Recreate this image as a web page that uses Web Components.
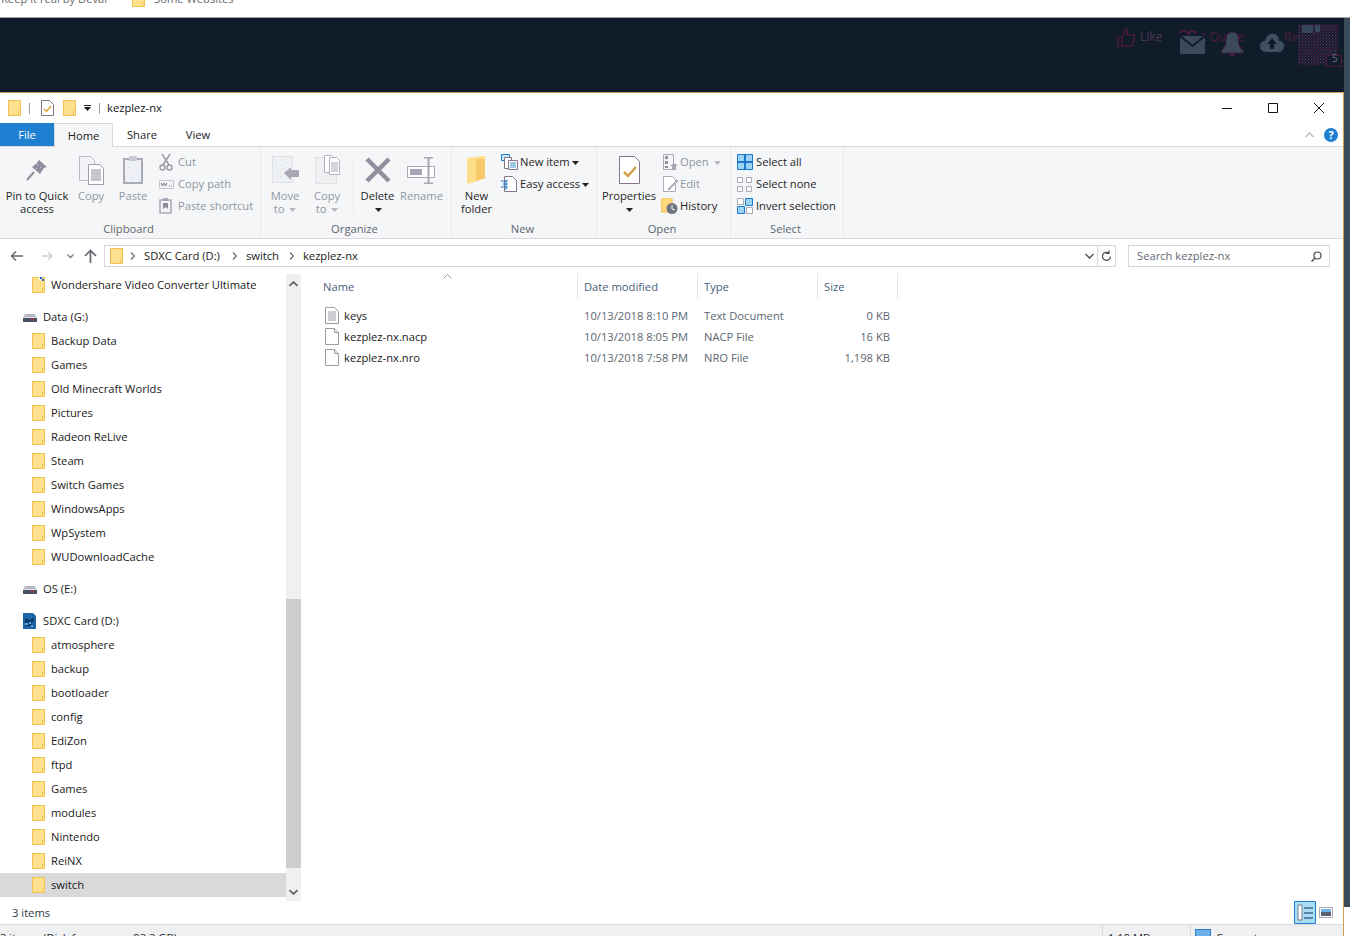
<!DOCTYPE html>
<html lang="en">
  <head>
    <meta charset="UTF-8" />
    <title>kezplez-nx</title>
    <style>
      html, body { margin: 0; height: 936px; overflow: hidden; background: #fff; }
      body { font: 11.2px/16px "Open Sans", "Liberation Sans", sans-serif; color: #1a1a1a; }
    </style>
  </head>
  <body>
    <bookmark-bar>
      <span style="margin-left:1px">Keep it real by Devai</span>
      <x-icon name="folder" style="margin-left:25px"></x-icon>
      <span style="margin-left:9px">Some Websites</span>
    </bookmark-bar>

    <desktop-shot>
      <forum-band slot="band"></forum-band>
      <explorer-window slot="window" title="kezplez-nx">
        <title-row slot="title"></title-row>
        <ribbon-tabs slot="tabs"></ribbon-tabs>
        <explorer-ribbon slot="ribbon"></explorer-ribbon>
        <address-row slot="address"></address-row>
        <nav-tree slot="tree"></nav-tree>
        <file-list slot="files"></file-list>
        <status-row slot="status"></status-row>
        <under-status slot="under"></under-status>
      </explorer-window>
    </desktop-shot>

    <script>
      const GREY = "#a9a9b8";
      const ICONS = {
        folder: [13, 16, `<rect x=".5" y=".5" width="12" height="15" fill="#ffe08f" stroke="#f4c24f"/><path d="M10.5 11.5h2v4h-2z" fill="#ffe9b0" stroke="#f4c24f"/>`],
        wfolder: [13, 16, `<rect x=".5" y=".5" width="12" height="15" fill="#ffe08f" stroke="#f4c24f"/><path d="M10.5 11.5h2v4h-2z" fill="#ffe9b0" stroke="#f4c24f"/><path d="M7 0h3v3H7z" fill="#fff"/><path d="M8 0h2v2H8zM10 2h2v2h-2z" fill="#1668c8"/>`],
        titledoc: [13, 16, `<path d="M.5.5h8l4 4v11H.5z" fill="#fff" stroke="#85758a"/><path d="M3 9l2.5 2.5L10 6" fill="none" stroke="#e0a030" stroke-width="1.4"/>`],
        drive: [14, 16, `<path d="M2 5h10l2 4H0z" fill="#b5bac4"/><path d="M0 9h14v4H0z" fill="#4a5160"/><path d="M8 10h3v1H8z" fill="#c33"/><path d="M0 8h14v1H0z" fill="#e2e4ea"/>`],
        sd: [13, 16, `<path d="M0 0h10l3 3v13H0z" fill="#1c67a8"/><path d="M2 5l5 2 4-3v4l-3 2 3 3H2z" fill="#0c3b66"/><path d="M2 10h3v2H2zM6 9h2v2H6zM8 12h2v2H8z" fill="#5bb0ee"/>`],
        text: [14, 17, `<path d="M.5.5h9l4 4v12H.5z" fill="#fff" stroke="#9a9aa2"/><path d="M3 5h8M3 7h8M3 9h8M3 11h8M3 13h8" stroke="#9a9aa2"/>`],
        blank: [14, 17, `<path d="M.5.5h9l4 4v12H.5z" fill="#fff" stroke="#9a9aa2"/><path d="M9.5.5v4h4" fill="#eee" stroke="#9a9aa2"/>`],
        pin: [22, 22, `<path d="M13 1l8 7-3 1-4 6-8-7 5-4z" fill="#8f8f9f"/><path d="M8 13l-7 8" stroke="#8f8f9f" stroke-width="2"/><path d="M11 5h1v1h-1zM14 8h1v1h-1zM10 9h1v1h-1z" fill="#c9c9d4"/>`],
        copy: [25, 29, `<path d="M.5.5h11l4 4v20H.5z" fill="#f3f4f8" stroke="#b9bac8"/><path d="M9.5 8.5h11l4 4v16h-15z" fill="#fff" stroke="#9e9eae"/><path d="M12 14h10M12 16h10M12 18h10M12 20h10M12 22h10M12 24h10" stroke="#8c8c9c"/>`],
        paste: [20, 30, `<path d="M1 4h18v24H1z" fill="#eef0f5" stroke="${GREY}" stroke-width="2"/><path d="M6 1h8v5H6z" fill="#c9cad6"/><path d="M6 12h1v1H6zM13 18h1v1h-1zM9 22h1v1H9zM15 24h1v1h-1z" fill="#9fd4f3"/>`],
        cut: [14, 17, `<path d="M3 0l7 11M11 0L4 11" stroke="#9a9aa8" stroke-width="1.5"/><circle cx="3.5" cy="13.5" r="2.5" fill="none" stroke="#9a9aa8" stroke-width="1.4"/><circle cx="10.5" cy="13.5" r="2.5" fill="none" stroke="#9a9aa8" stroke-width="1.4"/>`],
        copypath: [15, 9, `<path d="M.5.5h14v8H.5z" fill="#f4f4f6" stroke="#c6c6d0"/><path d="M2 3l1.500 3L5 3l1.500 3L8 3M10 6h1M12 6h1" fill="none" stroke="#77778a"/>`],
        shortcut: [13, 16, `<path d="M1 2h11v13H1z" fill="#f3f3f6" stroke="${GREY}" stroke-width="1.500"/><path d="M4 0h5v3H4z" fill="${GREY}"/><path d="M4 5h5v6l-2-2-3 2z" fill="#8b8b9b"/>`],
        moveto: [27, 29, `<path d="M0 0h21v27H0z" fill="#dfe1e6"/><path d="M1 1h19v25H1z" fill="#eef0f2"/><path d="M3 4h1v1H3zM9 9h1v1H9zM5 14h1v1H5zM14 6h1v1h-1zM8 20h1v1H8z" fill="#b8dff3"/><path d="M12 17l7-6v3h8v7h-8v3z" fill="#a7a7b6"/>`],
        copyto: [25, 30, `<path d="M0 2h22v27H0z" fill="#dfe1e6"/><path d="M1 3h20v25H1z" fill="#eef0f2"/><path d="M9.500.5h7l3 3v14h-10z" fill="#fff" stroke="#b2b2c0"/><path d="M14.500 2.500h7l3 3v14h-10z" fill="#fff" stroke="#b2b2c0"/><path d="M16 8h7M16 10h7M16 12h7M16 14h7M16 16h7" stroke="#a9a9b8"/>`],
        del: [26, 26, `<path d="M2 2l22 22M24 2L2 24" stroke="#8f8f9e" stroke-width="4.500"/>`],
        rename: [29, 27, `<path d="M.5 9.500h27v11H.5z" fill="#fff" stroke="${GREY}"/><path d="M3 12h12v6H3z" fill="#a7a7b6"/><path d="M17 .5h9M17 26.500h9M21.500 1v25" fill="none" stroke="#a7a7b6" stroke-width="2"/>`],
        newfolder: [19, 28, `<path d="M0 2l15-2h3v22l-10 4-8 2z" fill="#ffdf8a"/><path d="M9 3h9v19l-9 3z" fill="#f7c968"/><path d="M11 6h1v1h-1zM14 10h1v1h-1zM11 14h1v1h-1zM15 17h1v1h-1z" fill="#ffeeb8"/>`],
        newitem: [17, 16, `<path d="M.5.5h8v6h-8z" fill="#cfe8fb" stroke="#1c78c8"/><path d="M3.500 3.500h7v11h-7z" fill="#fff" stroke="#85758a"/><path d="M7.500 6.500h9v9h-9z" fill="#fff" stroke="#85758a"/><path d="M9 9h6M9 11h6M9 13h6" stroke="#3d8ec9"/>`],
        easy: [16, 16, `<path d="M3.500.5h8l4 4v11h-12z" fill="#fff" stroke="#85758a"/><path d="M0 5h7M2 8h5M0 11h7" stroke="#1c78c8"/><path d="M5 4v10" stroke="#1c78c8"/>`],
        props: [21, 28, `<path d="M.5.5h15l5 5v22H.5z" fill="#fff" stroke="#85758a"/><path d="M5 16l4 4 8-9" fill="none" stroke="#d2a24a" stroke-width="2.500"/>`],
        open: [15, 16, `<path d="M.5.5h10v15H.5z" fill="#f5f5f7" stroke="${GREY}"/><path d="M2 2h3v3H2zM2 7h3v3H2zM2 12h3v2H2z" fill="#8f8f9e"/><path d="M11 9l4 3h-2v4h-4v-4H7z" fill="#a7a7b6"/>`],
        edit: [15, 16, `<path d="M.5.5h9l3 3v12H.5z" fill="#fff" stroke="${GREY}"/><path d="M5 13l9-9 1 1-9 9z" fill="#c9c9d4" stroke="#a7a7b6"/>`],
        history: [17, 16, `<path d="M0 0h11v14H0z" fill="#ffd978" stroke="#f0be55"/><circle cx="11" cy="10.500" r="5.500" fill="#6e7480"/><path d="M11 7v4l3 1" fill="none" stroke="#fff"/>`],
        selall: [16, 16, `<path d="M.5.5h15v15H.5z" fill="#9bd4f5" stroke="#1c78c8"/><path d="M8 0v16M0 8h16" stroke="#1c78c8" stroke-width="2"/>`],
        selnone: [15, 15, `<path d="M.5.5h5v5h-5zM9.500.5h5v5h-5zM.5 9.500h5v5h-5zM9.500 9.500h5v5h-5z" fill="#fff" stroke="${GREY}"/>`],
        selinv: [16, 16, `<path d="M.5.5h6v6h-6zM9.500 9.500h6v6h-6z" fill="#fff" stroke="${GREY}"/><path d="M8.500.5h7v7h-7zM.5 8.500h7v7h-7z" fill="#9bd4f5" stroke="#1c78c8"/>`],
      };

      class XIcon extends HTMLElement {
        connectedCallback() {
          const [w, h, body] = ICONS[this.getAttribute("name")];
          const shadow = this.attachShadow({ mode: "open" });
          shadow.innerHTML = `
            <style>:host { display: inline-flex; flex: none; } svg { display: block; }</style>
            <svg width="${w}" height="${h}" viewBox="0 0 ${w} ${h}">${body}</svg>`;
        }
      }
      customElements.define("x-icon", XIcon);

      // helper for the plain "one shadow root, set once" elements
      const define = (name, css, html) => {
        customElements.define(
          name,
          class extends HTMLElement {
            constructor() {
              super();
              const shadow = this.attachShadow({ mode: "open" });
              shadow.innerHTML = `<style>${css}</style>${typeof html === "function" ? html(this) : html}`;
            }
          }
        );
      };

      define(
        "bookmark-bar",
        `:host { display: flex; align-items: center; height: 17px; overflow: hidden; border-bottom: 1px solid #9ea2a6; color: #6a6a6a; box-sizing: content-box; }
         div { display: flex; align-items: center; margin-top: -19px; height: 17px; }`,
        `<div><slot></slot></div>`
      );

      define(
        "desktop-shot",
        `:host { display: flex; height: 918px; }
         .left { width: 1344px; display: flex; flex-direction: column; }
         .strip { width: 6px; height: 889px; background: #3a4a5b; }`,
        `<div class="left"><slot name="band"></slot><slot name="window"></slot></div><div class="strip"></div>`
      );

      define(
        "forum-band",
        `:host { display: block; position: relative; height: 74px; background: #111c2b; }
         .lbl { position: absolute; top: 11px; color: #4a1c3a; font-size: 12px; }
         svg { position: absolute; }`,
        `<span class="lbl" style="left:1140px;color:#4a3a50">Like</span>
         <span class="lbl" style="left:1202px">t Quote</span>
         <span class="lbl" style="left:1284px">Reply</span>
         <svg style="left:1117px;top:10px" width="20" height="20" viewBox="0 0 20 20"><path d="M1 9h4v9H1zM5 9l4-8c2 0 2 2 1 6h7c1 1 0 9-2 11H5" fill="none" stroke="#4a1c3a" stroke-width="1.500"/></svg>
         <svg style="left:1178px;top:11px" width="28" height="26" viewBox="0 0 28 26"><path d="M2 7h25v18H2z" fill="#3a4a5b"/><path d="M2 7l12.500 10L27 7" fill="none" stroke="#111c2b" stroke-width="2"/><path d="M2 4c2-4 7-3 8 1 2-4 7-4 8 0" fill="none" stroke="#4a1c3a" stroke-width="2"/></svg>
         <svg style="left:1221px;top:14px" width="23" height="24" viewBox="0 0 23 24"><path d="M11.500 0c5 0 6 4 6 9 0 5 2 7 5 10v2H0v-2c3-3 5-5 5-10 0-5 1-9 6.500-9z M8 22h7l-3.500 2z" fill="#3a4a5b" stroke="#3f1a36"/></svg>
         <svg style="left:1260px;top:14px" width="24" height="22" viewBox="0 0 24 22"><path d="M6 20C1 20 0 16 0 14c0-3 2-5 5-5 1-5 5-8 9-7 4 1 5 4 5 7 3 0 5 2 5 5s-2 6-5 6z" fill="#3f5062"/><path d="M12 6l5 6h-3v5h-4v-5H7z" fill="#111c2b"/></svg>
         <svg style="left:1298px;top:6px" width="44" height="43" viewBox="0 0 44 43" shape-rendering="crispEdges"><defs><pattern id="d" width="3" height="3" patternUnits="userSpaceOnUse"><rect width="3" height="3" fill="#171d30"/><rect width="1" height="1" fill="#5c1840"/><rect x="2" y="1" width="1" height="1" fill="#4a1c3a"/><rect x="1" y="2" width="1" height="1" fill="#3d4a5e"/></pattern></defs><path d="M0 0h40v31h4v12H28v-2H0z" fill="url(#d)"/><path d="M4 1h11v8H4zM17 1h5v7h-5z" fill="#34465a"/><path d="M28.500 31.500h15v11h-15z" fill="#141b2c" stroke="#4a1c3a"/></svg>
         <span class="lbl" style="left:1332px;top:34px;color:#5f6f80;font-size:10px;line-height:12px">5</span>`
      );

      define(
        "explorer-window",
        `:host { display: flex; flex-direction: column; flex: 1; border-top: 1px solid #cb9f55; border-right: 1px solid #cb9f55; background: #fff; min-height: 0; width: 1343px; box-sizing: content-box; }
         .panes { flex: 1; display: flex; min-height: 0; }`,
        `<slot name="title"></slot><slot name="tabs"></slot><slot name="ribbon"></slot><slot name="address"></slot>
         <div class="panes"><slot name="tree"></slot><slot name="files"></slot></div>
         <slot name="status"></slot><slot name="under"></slot>`
      );

      define(
        "title-row",
        `:host { display: flex; align-items: center; height: 30px; padding-left: 8px; color: #14141e; }
         .pipe { width: 1px; height: 11px; background: #a0a0a0; }
         .arrow { width: 7px; height: 6px; margin-left: 8px; }
         .t { margin-left: 7px; }
         .ctl { margin-left: auto; display: flex; padding-right: 1px; }
         .ctl svg { width: 46px; height: 14px; }`,
        `<x-icon name="folder"></x-icon>
         <span class="pipe" style="margin-left:8px"></span>
         <x-icon name="titledoc" style="margin-left:11px"></x-icon>
         <x-icon name="folder" style="margin-left:9px"></x-icon>
         <svg class="arrow" viewBox="0 0 7 6"><path d="M0 0h7v1H0zM0 2h7L3.500 6z" fill="#14141e"/></svg>
         <span class="pipe" style="margin-left:8px"></span>
         <span class="t">kezplez-nx</span>
         <div class="ctl">
           <svg viewBox="0 0 46 14"><path d="M18 7.500h10" stroke="#14141e"/></svg>
           <svg viewBox="0 0 46 14"><path d="M18.500 2.500h9v9h-9z" fill="none" stroke="#14141e"/></svg>
           <svg viewBox="0 0 46 14"><path d="M18 2l10 10M28 2L18 12" stroke="#14141e"/></svg>
         </div>`
      );

      define(
        "ribbon-tabs",
        `:host { display: flex; height: 24px; align-items: stretch; border-bottom: 1px solid #d9d9dc; position: relative; box-sizing: border-box; }
         span { display: flex; align-items: center; justify-content: center; color: #222; }
         .file { width: 54px; background: #1f7fd0; color: #fff; }
         .home { width: 57px; background: #f5f6f7; border: 1px solid #d9d9dc; border-bottom: 0; margin-bottom: -1px; }
         .share { width: 60px; margin-left: -1px; }
         .view { width: 52px; }
         .end { margin-left: auto; display: flex; align-items: center; padding-right: 5px; gap: 10px; }
         .q { width: 14px; height: 14px; border-radius: 50%; background: #1f7fd0; color: #fff; font-size: 11px; font-weight: 700; line-height: 14px; }`,
        `<span class="file">File</span><span class="home">Home</span><span class="share">Share</span><span class="view">View</span>
         <div class="end">
           <svg width="9" height="6" viewBox="0 0 9 6"><path d="M.5 5l4-4 4 4" fill="none" stroke="#b8b8be" stroke-width="1.300"/></svg>
           <span class="q">?</span>
         </div>`
      );

      // ribbon parts
      define(
        "rb-big",
        `:host { display: flex; flex-direction: column; align-items: center; width: var(--w, 42px); text-align: center; line-height: 13px; white-space: nowrap; color: #262626; }
         :host([off]) { color: #8e98a2; }
         .i { height: 38px; display: flex; align-items: center; justify-content: center; }
         .t { display: block; }`,
        (el) => `<div class="i"><slot name="i"></slot></div><div class="t"><slot></slot></div>`
      );
      define(
        "rb-small",
        `:host { display: flex; align-items: center; height: 22px; white-space: nowrap; color: #262626; }
         :host([off]) { color: #8e98a2; }
         .i { width: var(--iw, 19px); display: flex; flex: none; }
         .t { display: block; }`,
        `<div class="i"><slot name="i"></slot></div><div class="t"><slot></slot></div>`
      );
      define(
        "rb-group",
        `:host { display: flex; flex-direction: column; height: 90px; box-sizing: border-box; border-right: 1px solid #e8e9ec; padding-top: 4px; }
         .b { flex: 1; display: flex; }
         .l { text-align: center; height: 16px; color: #5c6670; line-height: 16px; padding-right: 3px; }`,
        (el) => `<div class="b"><slot></slot></div><div class="l">${el.getAttribute("label")}</div>`
      );
      define(
        "rb-col",
        `:host { display: flex; flex-direction: column; margin-top: 0; }`,
        `<slot></slot>`
      );

      const caret = (c) => `<svg width="7" height="4" viewBox="0 0 7 4" style="margin-left:2px;vertical-align:1px"><path d="M0 0h7L3.500 4z" fill="${c}"/></svg>`;
      const big = (icon, label, w, off) =>
        `<rb-big style="--w:${w}px" ${off ? "off" : ""}><x-icon slot="i" name="${icon}"></x-icon>${label}</rb-big>`;
      const small = (icon, label, iw, off, nudge = 0) =>
        `<rb-small style="--iw:${iw}px" ${off ? "off" : ""}><x-icon slot="i" name="${icon}" style="margin-left:${nudge}px"></x-icon>${label}</rb-small>`;

      define(
        "explorer-ribbon",
        `:host { display: flex; height: 92px; background: #f5f6f7; border-bottom: 1px solid #d9d9dc; box-sizing: border-box; }
         .sep { width: 1px; height: 58px; background: #e8e9ec; margin: 6px 0 0 8px; }`,
        `
        <rb-group label="Clipboard" style="width:261px">
          ${big("pin", "Pin to Quick<br>access", 74, false)}
          ${big("copy", "Copy", 34, true)}
          ${big("paste", "Paste", 50, true)}
          <rb-col style="margin-left:1px">
            ${small("cut", "Cut", 19, true)}
            ${small("copypath", "Copy path", 19, true)}
            ${small("shortcut", "Paste shortcut", 19, true)}
          </rb-col>
        </rb-group>
        <rb-group label="Organize" style="width:191px">
          ${big("moveto", "Move<br>to " + caret("#b4b8bd"), 48, true)}
          ${big("copyto", "Copy<br>to " + caret("#b4b8bd"), 36, true)}
          <div class="sep"></div>
          ${big("del", "Delete<br>" + caret("#222"), 47, false)}
          ${big("rename", "Rename", 41, true)}
        </rb-group>
        <rb-group label="New" style="width:145px">
          ${big("newfolder", "New<br>folder", 49, false)}
          <rb-col>
            ${small("newitem", "New item" + caret("#222"), 19, false)}
            ${small("easy", "Easy access" + caret("#222"), 19, false)}
          </rb-col>
        </rb-group>
        <rb-group label="Open" style="width:134px">
          ${big("props", "Properties<br>" + caret("#222"), 64, false)}
          <rb-col>
            ${small("open", "Open " + caret("#b4b8bd"), 19, true, 2)}
            ${small("edit", "Edit", 19, true, 2)}
            ${small("history", "History", 19, false)}
          </rb-col>
        </rb-group>
        <rb-group label="Select" style="width:113px">
          <rb-col style="margin-left:6px">
            ${small("selall", "Select all", 19, false)}
            ${small("selnone", "Select none", 19, false)}
            ${small("selinv", "Invert selection", 19, false)}
          </rb-col>
        </rb-group>`
      );

      define(
        "address-row",
        `:host { display: flex; align-items: flex-start; height: 34px; padding-top: 6px; box-sizing: border-box; }
         .nav { width: 104px; display: flex; align-items: center; height: 22px; padding-left: 10px; box-sizing: border-box; gap: 0; }
         .bar { width: 1012px; height: 22px; box-sizing: border-box; border: 1px solid #d9d9d9; display: flex; align-items: center; padding-left: 5px; color: #1a1a1a; }
         .bar b { font-weight: 400; }
         .end { margin-left: auto; display: flex; align-items: center; height: 100%; }
         .end i { width: 1px; height: 100%; background: #d9d9d9; margin-left: 6px; }
         .search { width: 202px; margin-left: 12px; height: 22px; box-sizing: border-box; border: 1px solid #d9d9d9; display: flex; align-items: center; justify-content: space-between; padding: 0 7px 0 8px; color: #5f6a74; }`,
        `<div class="nav">
           <svg width="14" height="12" viewBox="0 0 14 12"><path d="M13 6H2M6 1.500L1.500 6 6 10.500" fill="none" stroke="#6b6470" stroke-width="1.500"/></svg>
           <svg style="margin-left:18px" width="12" height="12" viewBox="0 0 12 12"><path d="M0 6h10M6 2l4 4-4 4" fill="none" stroke="#cfcfd6" stroke-width="1.300"/></svg>
           <svg style="margin-left:13px" width="7" height="5" viewBox="0 0 7 5"><path d="M.5.5l3 3 3-3" fill="none" stroke="#80798a" stroke-width="1.300"/></svg>
           <svg style="margin-left:10px" width="13" height="14" viewBox="0 0 13 14"><path d="M6.500 14V2M1 7l5.500-5.500L12 7" fill="none" stroke="#6b6470" stroke-width="1.700"/></svg>
         </div>
         <div class="bar">
           <x-icon name="folder"></x-icon>
           <svg style="margin-left:7px" width="5" height="8" viewBox="0 0 5 8"><path d="M1 .5L4.500 4 1 7.500" fill="none" stroke="#6b6470" stroke-width="1.200"/></svg>
           <b style="margin-left:9px">SDXC Card (D:)</b>
           <svg style="margin-left:12px" width="5" height="8" viewBox="0 0 5 8"><path d="M1 .5L4.500 4 1 7.500" fill="none" stroke="#6b6470" stroke-width="1.200"/></svg>
           <b style="margin-left:9px">switch</b>
           <svg style="margin-left:10px" width="5" height="8" viewBox="0 0 5 8"><path d="M1 .5L4.500 4 1 7.500" fill="none" stroke="#6b6470" stroke-width="1.200"/></svg>
           <b style="margin-left:9px">kezplez-nx</b>
           <div class="end">
             <svg width="9" height="6" viewBox="0 0 9 6"><path d="M.5 1l4 4 4-4" fill="none" stroke="#4a4a55" stroke-width="1.300"/></svg>
             <i style="margin-left:3px"></i>
             <svg style="margin:0 3px" width="11" height="12" viewBox="0 0 11 12"><path d="M9.500 6.500a4 4 0 1 1-1.500-3.300M8 .5v3H5" fill="none" stroke="#4a4a55" stroke-width="1.200"/></svg>
           </div>
         </div>
         <div class="search">Search kezplez-nx
           <svg width="11" height="11" viewBox="0 0 11 11"><circle cx="6.500" cy="4.500" r="3.500" fill="none" stroke="#4a4a55" stroke-width="1.200"/><path d="M4 7l-3.500 3.500" stroke="#4a4a55" stroke-width="1.500"/></svg>
         </div>`
      );

      define(
        "tree-row",
        `:host { display: flex; align-items: center; height: 24px; white-space: nowrap; padding-left: 32px; color: #1a1a1a; }
         :host([drive]) { padding-left: 23px; }
         :host([selected]) { background: #d9d9d9; }
         .i { display: flex; width: 19px; }
         :host([drive]) .i { width: 20px; }`,
        (el) => `<div class="i"><x-icon name="${el.getAttribute("icon") || "folder"}"></x-icon></div><slot></slot>`
      );

      const folderRows = (names) => names.map((n) => `<tree-row>${n}</tree-row>`).join("");
      define(
        "nav-tree",
        `:host { display: flex; width: 301px; flex: none; }
         .rows { width: 286px; }
         .gap { height: 8px; }
         .bar { width: 15px; background: #f0f0f0; margin-top: 1px; display: flex; flex-direction: column; align-items: center; }
         .up { height: 20px; display: flex; align-items: center; }
         .thumb { width: 100%; height: 269px; background: #cdcdcd; margin-top: 305px; }
         .dn { margin-top: auto; height: 18px; display: flex; align-items: center; }`,
        `<div class="rows">
           <tree-row icon="wfolder">Wondershare Video Converter Ultimate</tree-row>
           <div class="gap"></div>
           <tree-row drive icon="drive">Data (G:)</tree-row>
           ${folderRows(["Backup Data", "Games", "Old Minecraft Worlds", "Pictures", "Radeon ReLive", "Steam", "Switch Games", "WindowsApps", "WpSystem", "WUDownloadCache"])}
           <div class="gap"></div>
           <tree-row drive icon="drive">OS (E:)</tree-row>
           <div class="gap"></div>
           <tree-row drive icon="sd">SDXC Card (D:)</tree-row>
           ${folderRows(["atmosphere", "backup", "bootloader", "config", "EdiZon", "ftpd", "Games", "modules", "Nintendo", "ReiNX"])}
           <tree-row selected>switch</tree-row>
         </div>
         <div class="bar">
           <div class="up"><svg width="9" height="6" viewBox="0 0 9 6"><path d="M.5 5l4-4 4 4" fill="none" stroke="#5a5a64" stroke-width="1.600"/></svg></div>
           <div class="thumb"></div>
           <div class="dn"><svg width="9" height="6" viewBox="0 0 9 6"><path d="M.5 1l4 4 4-4" fill="none" stroke="#5a5a64" stroke-width="1.600"/></svg></div>
         </div>`
      );

      define(
        "file-row",
        `:host { display: grid; grid-template-columns: 254px 120px 120px 73px; height: 21px; align-items: center; white-space: nowrap; }
         .n { display: flex; align-items: center; gap: 5px; padding-left: 2px; color: #1a1a1a; }
         .m { color: #5c6670; padding-left: 7px; }
         .s { color: #5c6670; text-align: right; }`,
        (el) => `<div class="n"><x-icon name="${el.getAttribute("icon")}"></x-icon>${el.getAttribute("name")}</div>
                 <div class="m">${el.getAttribute("date")}</div><div class="m">${el.getAttribute("type")}</div><div class="s">${el.getAttribute("size")}</div>`
      );

      define(
        "file-list",
        `:host { flex: 1; display: block; padding-left: 22px; position: relative; }
         .head { display: grid; grid-template-columns: 255px 120px 120px 80px; height: 26px; color: #4c607a; }
         .head div { border-right: 1px solid #e5e5e5; padding-left: 6px; line-height: 28px; height: 26px; }
         .head div:first-child { padding-left: 0; }
         .chev { position: absolute; left: 142px; top: 1px; }
         .rows { padding-top: 6px; }`,
        `<svg class="chev" width="9" height="5" viewBox="0 0 9 5"><path d="M.5 4.500l4-4 4 4" fill="none" stroke="#9a9aa2"/></svg>
         <div class="head"><div>Name</div><div>Date modified</div><div>Type</div><div>Size</div></div>
         <div class="rows">
           <file-row icon="text" name="keys" date="10/13/2018 8:10 PM" type="Text Document" size="0 KB"></file-row>
           <file-row icon="blank" name="kezplez-nx.nacp" date="10/13/2018 8:05 PM" type="NACP File" size="16 KB"></file-row>
           <file-row icon="blank" name="kezplez-nx.nro" date="10/13/2018 7:58 PM" type="NRO File" size="1,198 KB"></file-row>
         </div>`
      );

      define(
        "status-row",
        `:host { display: flex; align-items: center; height: 23px; padding-left: 12px; box-sizing: border-box; color: #303a44; }
         .r { margin-left: auto; display: flex; align-items: center; gap: 3px; padding-right: 10px; }`,
        `<span>3 items</span>
         <div class="r">
           <svg width="22" height="23" viewBox="0 0 22 23"><path d="M.5.5h21v22H.5z" fill="#a9dcf6" stroke="#1f7fd0"/><path d="M4 4h4v15H4z" fill="#fff" stroke="#7a7a86"/><path d="M10 7h9M10 12h9M10 17h9" stroke="#3d6a8a" stroke-width="1.300"/></svg>
           <svg width="14" height="11" viewBox="0 0 14 11"><path d="M.5.5h13v10H.5z" fill="#fff" stroke="#a9a9b4"/><path d="M2 2h10v3H2z" fill="#6eb2e8"/><path d="M2 5h10v4H2z" fill="#5a6070"/></svg>
         </div>`
      );

      define(
        "under-status",
        `:host { display: flex; height: 11px; overflow: hidden; background: #eff0f1; border-top: 1px solid #d9d9dc; color: #2a2a2a; }
         .a { margin-top: 5px; white-space: pre; width: 1102px; box-sizing: border-box; display: flex; }
         .a span { margin-left: 5px; }
         .b { width: 88px; border-left: 1px solid #d9d9dc; padding: 5px 0 0 5px; box-sizing: border-box; }
         .c { border-left: 1px solid #d9d9dc; padding: 0 0 0 4px; display: flex; gap: 5px; }
         .c i { width: 16px; height: 16px; margin-top: 4px; background: #6eb0e8; border: 1px solid #2f7fc8; box-sizing: border-box; }
         .c span { margin-top: 5px; }`,
        `<div class="a">3 items<span>(Disk free space:</span><span>93.3 GB)</span></div><div class="b">1.19 MB</div><div class="c"><i></i><span>Computer</span></div>`
      );
    </script>
  </body>
</html>
